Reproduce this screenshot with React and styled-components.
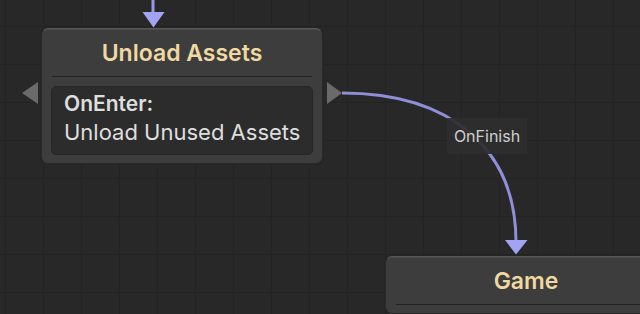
import React from "react";
import styled, { createGlobalStyle } from "styled-components";

const Global = createGlobalStyle`
  html, body { margin: 0; padding: 0; background: #282828; }
  body { font-family: Inter, "Noto Sans", sans-serif; }
`;

const Canvas = styled.div`
  position: relative;
  width: 640px;
  height: 314px;
  overflow: hidden;
  background-color: #282828;
  background-image:
    linear-gradient(to right, #232323 1px, transparent 1px),
    linear-gradient(to bottom, #232323 1px, transparent 1px);
  background-size: 38px 38px;
  background-position: 5px 26px;
`;

const Edges = styled.svg`
  position: absolute;
  left: 0;
  top: 0;
  width: 640px;
  height: 314px;
  pointer-events: none;
  z-index: 2;
`;

const Node = styled.div`
  position: absolute;
  left: ${(p) => p.$x}px;
  top: ${(p) => p.$y}px;
  width: 282px;
  box-sizing: border-box;
  padding: 0 9px 8px;
  display: flex;
  flex-direction: column;
  background: #3d3d3d;
  border: 1px solid #2a2a2a;
  border-top-color: #575757;
  border-radius: 7px;
  box-shadow: inset 0 1px 0 #4b4b4b, 0 0 0 1px #252525;
  z-index: 1;
`;

const Title = styled.div`
  height: 47px;
  display: flex;
  align-items: center;
  justify-content: center;
  color: #efd8a2;
  font-weight: 600;
  font-size: 23px;
  border-bottom: 1px solid #242424;
  margin: 0 1px;
`;

const Body = styled.div`
  margin-top: 9px;
  padding: 3px 4px 8px 12px;
  display: flex;
  flex-direction: column;
  background: #2c2c2c;
  border: 1px solid #262626;
  border-radius: 5px;
  color: #dedede;
  font-size: 22px;
  line-height: 28px;
  white-space: nowrap;
`;

const Strong = styled.div`
  font-weight: 600;
  font-size: 21px;
`;

const Port = styled.div`
  position: absolute;
  top: 53px;
  width: 0;
  height: 0;
  border-top: 11px solid transparent;
  border-bottom: 11px solid transparent;
  ${(p) =>
    p.$side === "left"
      ? `left: -20px; border-right: 16px solid #6a6a6a;`
      : `right: -20px; border-left: 15px solid #6a6a6a;`}
`;

const Label = styled.div`
  position: absolute;
  left: 447px;
  top: 118px;
  width: 80px;
  height: 36px;
  display: flex;
  align-items: center;
  justify-content: center;
  background: rgba(46, 46, 46, 0.93);
  color: #cfcfcf;
  font-size: 16px;
  z-index: 3;
`;

export default function App() {
  return (
    <>
      <Global />
      <Canvas>
        <Edges viewBox="0 0 640 314">
          <line x1="153" y1="0" x2="153" y2="14" stroke="#9797e6" strokeWidth="3" />
          <polygon points="142.5,12 164.5,12 153.5,27.5" fill="#a3a3f4" />
          <path
            d="M342 93 C 452 93 516 150 516 242"
            fill="none"
            stroke="#8f8fd8"
            strokeWidth="3"
          />
          <polygon points="505,240 527.5,240 516,254.5" fill="#a3a3f4" />
        </Edges>
        <Node $x={41} $y={28}>
          <Port $side="left" />
          <Port $side="right" />
          <Title>Unload Assets</Title>
          <Body>
            <Strong>OnEnter:</Strong>
            <span>Unload Unused Assets</span>
          </Body>
        </Node>
        <Label>OnFinish</Label>
        <Node $x={385} $y={256}>
          <Title>Game</Title>
        </Node>
      </Canvas>
    </>
  );
}
